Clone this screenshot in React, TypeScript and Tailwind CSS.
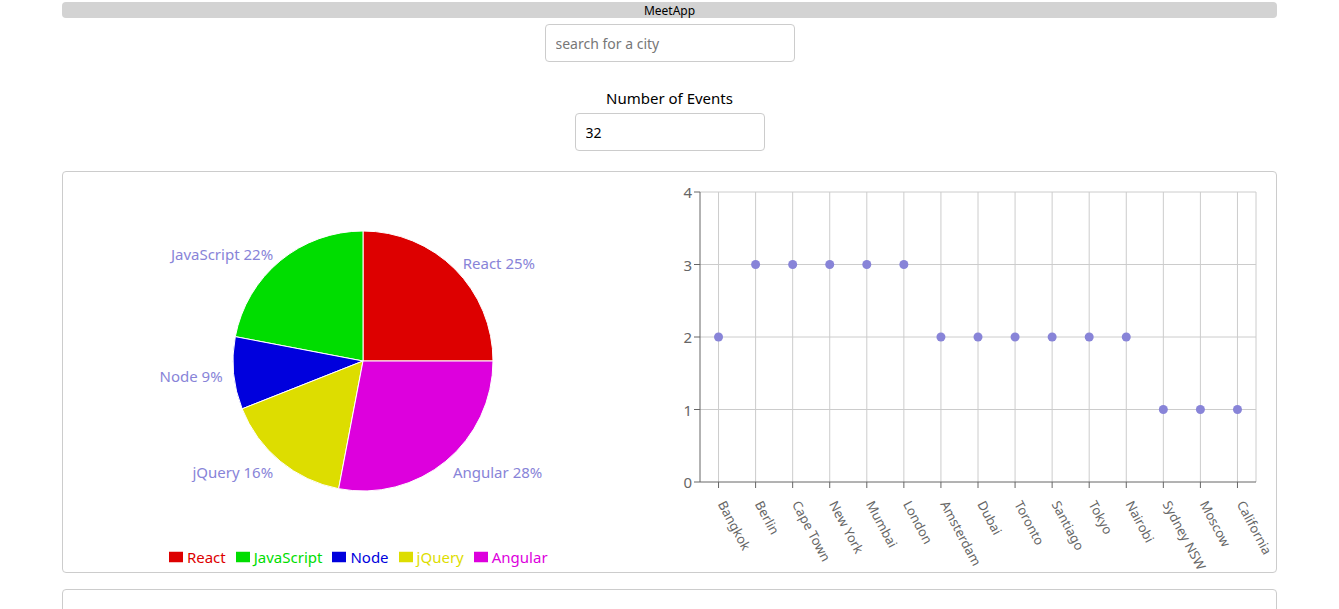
import React from 'react';

const FONT = '"Noto Sans", "Open Sans", sans-serif';

const pieData = [
  { name: 'React', value: 25, color: '#dd0000' },
  { name: 'JavaScript', value: 22, color: '#00dd00' },
  { name: 'Node', value: 9, color: '#0000dd' },
  { name: 'jQuery', value: 16, color: '#dddd00' },
  { name: 'Angular', value: 28, color: '#dd00dd' },
];

const cityData = [
  { city: 'Bangkok', count: 2 },
  { city: 'Berlin', count: 3 },
  { city: 'Cape Town', count: 3 },
  { city: 'New York', count: 3 },
  { city: 'Mumbai', count: 3 },
  { city: 'London', count: 3 },
  { city: 'Amsterdam', count: 2 },
  { city: 'Dubai', count: 2 },
  { city: 'Toronto', count: 2 },
  { city: 'Santiago', count: 2 },
  { city: 'Tokyo', count: 2 },
  { city: 'Nairobi', count: 2 },
  { city: 'Sydney NSW', count: 1 },
  { city: 'Moscow', count: 1 },
  { city: 'California', count: 1 },
];

/* ---------- Pie chart ---------- */
function GenrePie() {
  const cx = 300;
  const cy = 189;
  const r = 130;
  const total = pieData.reduce((s, d) => s + d.value, 0);
  let start = 0;

  const pt = (deg: number, rad: number) => {
    const a = (deg * Math.PI) / 180;
    return [cx + rad * Math.cos(a), cy - rad * Math.sin(a)];
  };

  const slices = pieData.map((d) => {
    const end = start + (d.value / total) * 360;
    const [x1, y1] = pt(start, r);
    const [x2, y2] = pt(end, r);
    const large = end - start > 180 ? 1 : 0;
    const mid = (start + end) / 2;
    const [lx, ly] = pt(mid, 141);
    const slice = {
      ...d,
      path: `M${cx},${cy} L${x1},${y1} A${r},${r} 0 ${large} 0 ${x2},${y2} Z`,
      lx,
      ly,
      anchor: Math.cos((mid * Math.PI) / 180) >= 0 ? 'start' : 'end',
    };
    start = end;
    return slice;
  });

  return (
    <div className="flex flex-col items-center">
      <svg width={607} height={374}>
        {slices.map((s) => (
          <path key={s.name} d={s.path} fill={s.color} stroke="#fff" strokeWidth={1} />
        ))}
        {slices.map((s) => (
          <text
            key={s.name + '-l'}
            x={s.lx}
            y={s.ly + 2}
            fill="#8884d8"
            fontSize={15}
            textAnchor={s.anchor}
            dominantBaseline="central"
            style={{ fontFamily: FONT }}
          >
            {s.name} {s.value}%
          </text>
        ))}
      </svg>
      <ul className="flex items-center -ml-[6px]">
        {pieData.map((d) => (
          <li key={d.name} className="flex items-center mr-[10px] text-[15px]" style={{ color: d.color }}>
            <svg width={14} height={14} className="mr-1">
              <path d="M0,1.75h14v10.5h-14z" fill={d.color} />
            </svg>
            {d.name}
          </li>
        ))}
      </ul>
    </div>
  );
}

/* ---------- Scatter chart ---------- */
function CityScatter() {
  const left = 30;
  const right = 586;
  const top = 20;
  const bottom = 310;
  const band = (right - left) / cityData.length;
  const y = (v: number) => bottom - ((bottom - top) * v) / 4;
  const xs = cityData.map((_, i) => left + band / 2 + i * band);

  return (
    <svg width={607} height={400} style={{ fontFamily: FONT }}>
      {/* grid */}
      {[1, 2, 3, 4].map((v) => (
        <line key={'h' + v} x1={left} x2={right} y1={y(v)} y2={y(v)} stroke="#ccc" />
      ))}
      {xs.map((x, i) => (
        <line key={'v' + i} x1={x} x2={x} y1={top} y2={bottom} stroke="#ccc" />
      ))}
      <line x1={right} x2={right} y1={top} y2={bottom} stroke="#ccc" />

      {/* axes */}
      <line x1={left} x2={left} y1={top} y2={bottom} stroke="#666" />
      <line x1={left} x2={right} y1={bottom} y2={bottom} stroke="#666" />
      {[0, 1, 2, 3, 4].map((v) => (
        <g key={'yt' + v}>
          <line x1={left - 6} x2={left} y1={y(v)} y2={y(v)} stroke="#666" />
          <text x={left - 8} y={y(v)} fill="#666" fontSize={15} textAnchor="end" dominantBaseline="central">
            {v}
          </text>
        </g>
      ))}
      {xs.map((x, i) => (
        <g key={'xt' + i}>
          <line x1={x} x2={x} y1={bottom} y2={bottom + 6} stroke="#666" />
          <text
            x={x - 1}
            y={bottom + 22}
            fill="#666"
            fontSize={13}
            textAnchor="start"
            transform={`rotate(62 ${x - 1} ${bottom + 22})`}
          >
            {cityData[i].city}
          </text>
        </g>
      ))}

      {/* points */}
      {cityData.map((d, i) => (
        <circle key={d.city} cx={xs[i]} cy={y(d.count)} r={4.5} fill="#8884d8" />
      ))}
    </svg>
  );
}

export default function App() {
  return (
    <div className="min-h-screen bg-white px-[62px] pt-[2px] text-black" style={{ fontFamily: FONT }}>
      {/* Header */}
      <div className="h-4 rounded bg-[#d3d3d3] text-center text-[12px] leading-[17px]">MeetApp</div>

      {/* City search */}
      <div className="mt-[6px] flex justify-center">
        <input
          className="h-[38px] w-[250px] rounded border border-[#ccc] px-[10px] text-[14px] outline-none placeholder:text-[#777]"
          placeholder="search for a city"
        />
      </div>

      {/* Number of events */}
      <div className="mt-[26px] flex flex-col items-center">
        <label className="text-[15px] leading-5">Number of Events</label>
        <input
          className="mt-[5px] h-[38px] w-[190px] rounded border border-[#ccc] px-[10px] text-[14px] outline-none"
          defaultValue="32"
        />
      </div>

      {/* Charts */}
      <div className="mt-5 grid h-[402px] grid-cols-2 rounded border border-[#ccc]">
        <GenrePie />
        <CityScatter />
      </div>

      {/* Events list */}
      <div className="mt-4 h-[60px] rounded border border-[#ccc]" />
    </div>
  );
}
